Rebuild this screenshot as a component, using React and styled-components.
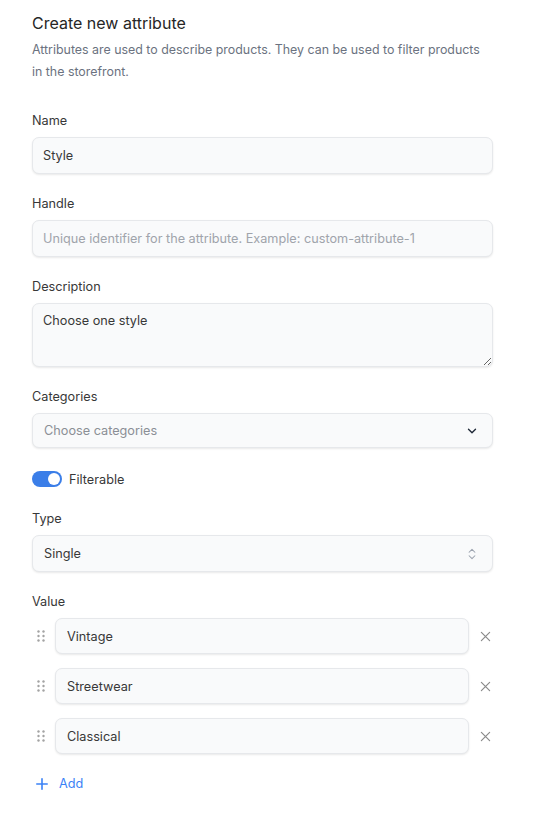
import React from 'react'
import styled, { createGlobalStyle } from 'styled-components'

const GlobalStyle = createGlobalStyle`
  * { box-sizing: border-box; }
  body {
    margin: 0;
    background: #ffffff;
    font-family: Inter, "Noto Sans", sans-serif;
    color: #383838;
  }
`

const values = ['Vintage', 'Streetwear', 'Classical']

const ChevronDown = () => (
  <svg width="14" height="14" viewBox="0 0 24 24" fill="none" stroke="#1f2937" strokeWidth="2.3" strokeLinecap="round" strokeLinejoin="round">
    <path d="M6 9l6 6 6-6" />
  </svg>
)

const ChevronsUpDown = () => (
  <svg width="14" height="16" viewBox="0 0 24 24" fill="none" stroke="#9ca3af" strokeWidth="1.8" strokeLinecap="round" strokeLinejoin="round">
    <path d="M7 9l5-5 5 5" />
    <path d="M7 15l5 5 5-5" />
  </svg>
)

const Grip = () => (
  <svg width="10" height="14" viewBox="0 0 10 14" fill="#a3a3a3">
    <circle cx="2.5" cy="2.5" r="1.2" />
    <circle cx="7.5" cy="2.5" r="1.2" />
    <circle cx="2.5" cy="7" r="1.2" />
    <circle cx="7.5" cy="7" r="1.2" />
    <circle cx="2.5" cy="11.5" r="1.2" />
    <circle cx="7.5" cy="11.5" r="1.2" />
  </svg>
)

const Cross = () => (
  <svg width="11" height="11" viewBox="0 0 12 12" fill="none" stroke="#8a8a8a" strokeWidth="1.3" strokeLinecap="round">
    <path d="M1.5 1.5l9 9M10.5 1.5l-9 9" />
  </svg>
)

const Plus = () => (
  <svg width="12" height="12" viewBox="0 0 12 12" fill="none" stroke="#3b82f6" strokeWidth="1.6" strokeLinecap="round">
    <path d="M6 0.8v10.4M0.8 6h10.4" />
  </svg>
)

const App = () => {
  return (
    <>
      <GlobalStyle />
      <Container>
        <Title>Create new attribute</Title>
        <Intro>
          Attributes are used to describe products. They can be used to filter products in the storefront.
        </Intro>

        <Field $first>
          <Label>Name</Label>
          <Input defaultValue="Style" />
        </Field>

        <Field>
          <Label>Handle</Label>
          <Input placeholder="Unique identifier for the attribute. Example: custom-attribute-1" />
        </Field>

        <Field>
          <Label>Description</Label>
          <Textarea defaultValue="Choose one style" />
        </Field>

        <Field>
          <Label>Categories</Label>
          <SelectBox $height={35}>
            <Placeholder>Choose categories</Placeholder>
            <ChevronDown />
          </SelectBox>
        </Field>

        <ToggleRow>
          <Track $on>
            <Knob $on />
          </Track>
          <ToggleText>Filterable</ToggleText>
        </ToggleRow>

        <Field>
          <Label>Type</Label>
          <SelectBox $height={37}>
            <SelectValue>Single</SelectValue>
            <ChevronsUpDown />
          </SelectBox>
        </Field>

        <Field>
          <Label>Value</Label>
          <ValueList>
            {values.map((v) => (
              <ValueRow key={v}>
                <Handle>
                  <Grip />
                </Handle>
                <ValueInput defaultValue={v} />
                <RemoveButton>
                  <Cross />
                </RemoveButton>
              </ValueRow>
            ))}
          </ValueList>
        </Field>

        <AddButton>
          <Plus />
          <span>Add</span>
        </AddButton>
      </Container>
    </>
  )
}

export default App

const Container = styled.div`
  width: 461px;
  margin-left: 32px;
  padding-top: 11px;
  display: flex;
  flex-direction: column;
`
const Title = styled.h1`
  margin: 0;
  font-size: 16px;
  line-height: 24px;
  font-weight: 400;
  color: #262626;
`
const Intro = styled.p`
  margin: 4px 0 0;
  max-width: 452px;
  font-size: 12.4px;
  line-height: 22px;
  color: #6b7280;
`
const Field = styled.div`
  display: flex;
  flex-direction: column;
  margin-top: ${(p) => (p.$first ? 29 : 21)}px;
`
const Label = styled.label`
  font-size: 12.7px;
  line-height: 18px;
  color: #383838;
  margin-bottom: 7px;
`
const inputBase = `
  width: 100%;
  border: 1px solid #e6e8eb;
  border-radius: 7px;
  background: #f9fafb;
  box-shadow: 0 1px 2px rgba(0, 0, 0, 0.09);
  font-family: Inter, "Noto Sans", sans-serif;
  font-size: 12.7px;
  color: #383838;
  outline: none;
`
const Input = styled.input`
  ${inputBase}
  height: 37px;
  padding: 0 10px;
  &::placeholder {
    color: #a0a4ab;
  }
`
const Textarea = styled.textarea`
  ${inputBase}
  height: 64px;
  padding: 8px 10px;
  resize: vertical;
  line-height: 18px;
`
const SelectBox = styled.div`
  ${inputBase}
  height: ${(p) => p.$height}px;
  padding: 0 13px 0 11px;
  display: flex;
  align-items: center;
  justify-content: space-between;
`
const Placeholder = styled.span`
  color: #8b8f96;
`
const SelectValue = styled.span`
  color: #383838;
`
const ToggleRow = styled.div`
  display: flex;
  align-items: center;
  gap: 7px;
  margin: 23px 0 2px;
`
const Track = styled.div`
  width: 30px;
  height: 16px;
  border-radius: 8px;
  background: ${(p) => (p.$on ? '#3b7ee8' : '#d1d5db')};
  display: flex;
  align-items: center;
  justify-content: ${(p) => (p.$on ? 'flex-end' : 'flex-start')};
  padding: 0 2px;
`
const Knob = styled.div`
  width: 12px;
  height: 12px;
  border-radius: 50%;
  background: #ffffff;
`
const ToggleText = styled.span`
  font-size: 12.7px;
  color: #383838;
`
const ValueList = styled.div`
  display: flex;
  flex-direction: column;
  gap: 14px;
`
const ValueRow = styled.div`
  display: flex;
  align-items: center;
`
const Handle = styled.div`
  width: 23px;
  display: flex;
  align-items: center;
  padding-left: 4px;
`
const ValueInput = styled.input`
  ${inputBase}
  width: 414px;
  height: 36px;
  padding: 0 11px;
`
const RemoveButton = styled.div`
  flex: 1;
  display: flex;
  justify-content: center;
  padding-left: 8px;
`
const AddButton = styled.div`
  display: flex;
  align-items: center;
  gap: 11px;
  margin-top: 22px;
  padding-left: 4px;
  font-size: 12.7px;
  color: #3b82f6;
`
